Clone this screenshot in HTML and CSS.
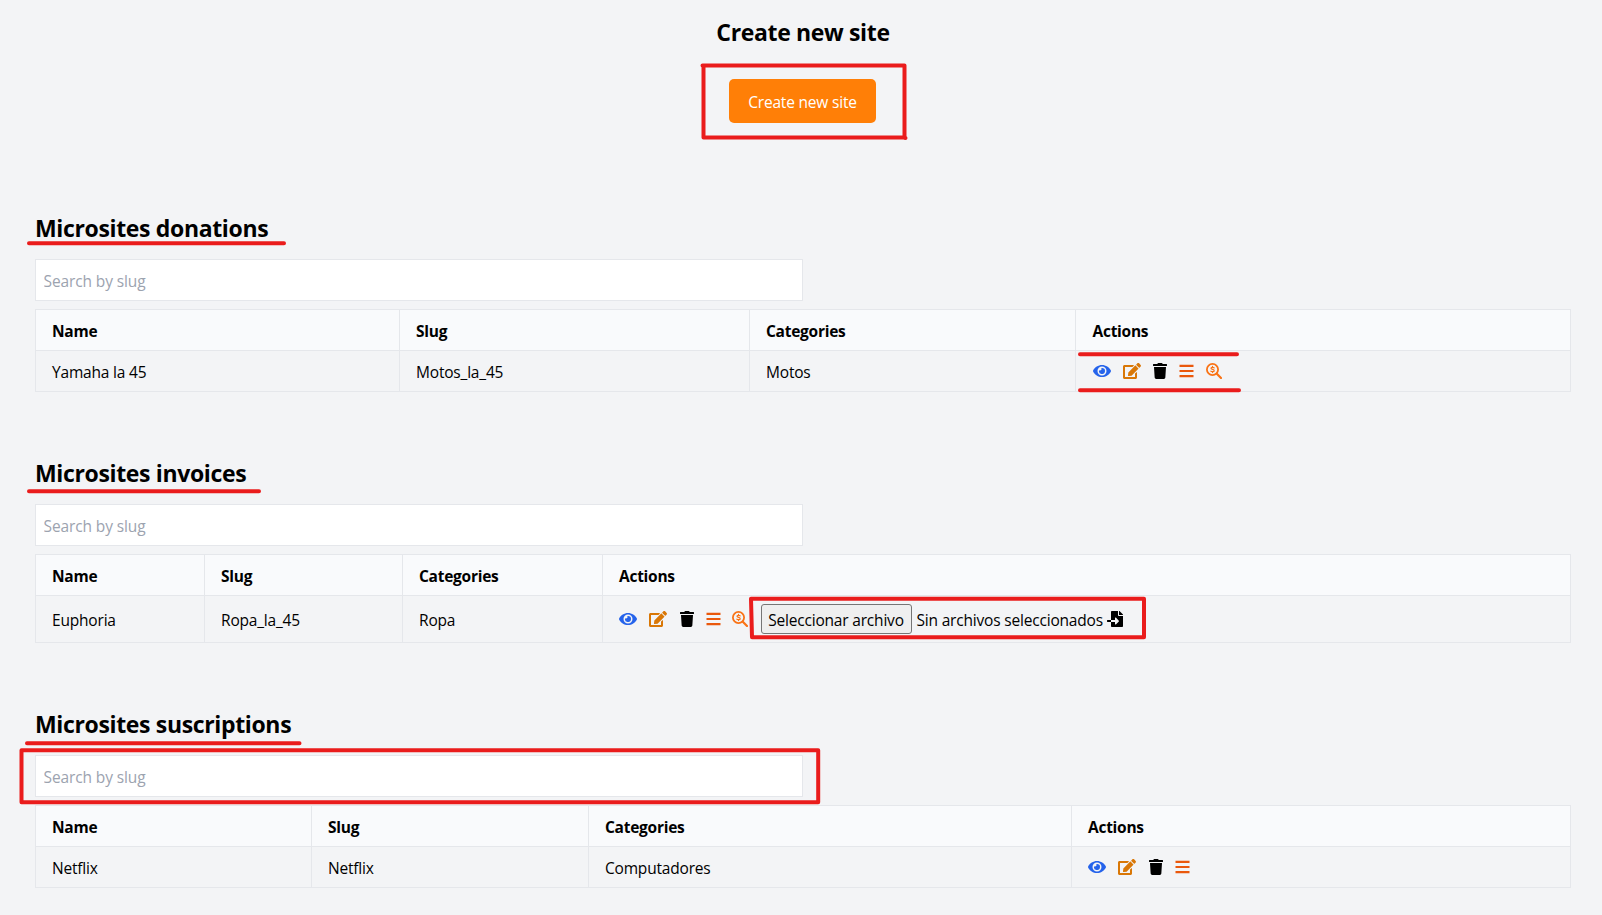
FILE: index.html
```html
<!DOCTYPE html>
<html lang="en">
<head>
<meta charset="utf-8">
<title>Microsites</title>
<link rel="stylesheet" href="styles.css">
</head>
<body>
<svg class="sprite" aria-hidden="true">
  <symbol id="eye" viewBox="0 0 576 512"><path d="M572.52 241.4C518.29 135.59 410.93 64 288 64S57.68 135.64 3.48 241.41a32.35 32.35 0 0 0 0 29.19C57.71 376.41 165.07 448 288 448s230.32-71.64 284.52-177.41a32.35 32.35 0 0 0 0-29.19zM288 400a144 144 0 1 1 144-144 143.93 143.93 0 0 1-144 144zm0-240a95.31 95.31 0 0 0-25.31 3.79 47.85 47.85 0 0 1-66.9 66.9A95.78 95.78 0 1 0 288 160z"/></symbol>
  <symbol id="edit" viewBox="0 0 576 512"><path d="M402.6 83.2l90.2 90.2c3.8 3.8 3.8 10 0 13.8L274.4 405.6l-92.8 10.3c-12.4 1.4-22.9-9.1-21.5-21.5l10.3-92.8L388.8 83.2c3.8-3.8 10-3.8 13.8 0zm162-22.9l-48.8-48.8c-15.2-15.2-39.9-15.2-55.2 0l-35.4 35.4c-3.8 3.8-3.8 10 0 13.8l90.2 90.2c3.8 3.8 10 3.8 13.8 0l35.4-35.4c15.2-15.3 15.2-40 0-55.2zM384 346.2V448H64V128h229.8c3.2 0 6.2-1.3 8.5-3.5l40-40c7.6-7.6 2.2-20.5-8.5-20.5H48C21.5 64 0 85.5 0 112v352c0 26.5 21.5 48 48 48h352c26.5 0 48-21.5 48-48V306.2c0-10.7-12.9-16-20.5-8.5l-40 40c-2.2 2.3-3.5 5.3-3.5 8.5z"/></symbol>
  <symbol id="trash" viewBox="0 0 448 512"><path d="M432 32H312l-9.4-18.7A24 24 0 0 0 281.1 0H166.8a23.72 23.72 0 0 0-21.4 13.3L136 32H16A16 16 0 0 0 0 48v32a16 16 0 0 0 16 16h416a16 16 0 0 0 16-16V48a16 16 0 0 0-16-16zM53.2 467a48 48 0 0 0 47.9 45h245.8a48 48 0 0 0 47.9-45L416 128H32z"/></symbol>
  <symbol id="bars" viewBox="0 0 15 16"><path d="M.5 1.800h14v2.200H.5zM.5 6.900h14v2.200H.5zM.5 12h14v2.200H.5z"/></symbol>
  <symbol id="dollar" viewBox="0 0 16 16"><g fill="none" stroke="currentColor" stroke-linecap="round"><circle cx="6.5" cy="6.5" r="5.6" stroke-width="1.800"/><path d="M10.800 10.800l4.200 4.200" stroke-width="2.200"/><path d="M8.200 4.900C7.600 4.300 5 4 5 5.300c0 1.500 3.200.8 3.200 2.400C8.200 9 5.500 8.900 4.800 8.100M6.500 3.400v.8M6.500 8.800v.8" stroke-width="1.200"/></g></symbol>
  <symbol id="import" viewBox="0 0 512 512"><path d="M16 288c-8.800 0-16 7.200-16 16v32c0 8.800 7.200 16 16 16h112v-64zm489-183L407.100 7c-4.500-4.500-10.600-7-17-7H384v128h128v-6.100c0-6.300-2.500-12.400-7-16.900zm-153 31V0H152c-13.300 0-24 10.700-24 24v264h128v-65.200c0-14.300 17.300-21.400 27.400-11.300L379 308c6.600 6.700 6.600 17.400 0 24l-95.700 96.400c-10.100 10.100-27.400 3-27.400-11.300V352H128v136c0 13.300 10.700 24 24 24h336c13.300 0 24-10.700 24-24V160H376c-13.200 0-24-10.800-24-24z"/></symbol>
</svg>
<main class="page">
  <header class="create">
    <h2 class="title">Create new site</h2>
    <button class="create-btn">Create new site</button>
  </header>

  <section class="microsites">
    <h2 class="title">Microsites donations</h2>
    <input class="search" placeholder="Search by slug">
    <table class="sites donations">
      <colgroup><col><col><col><col></colgroup>
      <tr><th>Name</th><th>Slug</th><th>Categories</th><th>Actions</th></tr>
      <tr><td>Yamaha la 45</td><td>Motos_la_45</td><td>Motos</td>
        <td><div class="actions">
          <svg class="icon blue"><use href="#eye"/></svg><svg class="icon amber"><use href="#edit"/></svg><svg class="icon trash"><use href="#trash"/></svg><svg class="icon bars"><use href="#bars"/></svg><svg class="icon dollar"><use href="#dollar"/></svg>
        </div></td></tr>
    </table>
  </section>

  <section class="microsites">
    <h2 class="title">Microsites invoices</h2>
    <input class="search" placeholder="Search by slug">
    <table class="sites invoices">
      <colgroup><col><col><col><col></colgroup>
      <tr><th>Name</th><th>Slug</th><th>Categories</th><th>Actions</th></tr>
      <tr><td>Euphoria</td><td>Ropa_la_45</td><td>Ropa</td>
        <td><div class="actions">
          <svg class="icon blue"><use href="#eye"/></svg><svg class="icon amber"><use href="#edit"/></svg><svg class="icon trash"><use href="#trash"/></svg><svg class="icon bars"><use href="#bars"/></svg><svg class="icon dollar"><use href="#dollar"/></svg>
          <div class="upload"><button class="file-btn">Seleccionar archivo</button><span class="file-name">Sin archivos seleccionados</span><svg class="icon import"><use href="#import"/></svg></div>
        </div></td></tr>
    </table>
  </section>

  <section class="microsites">
    <h2 class="title">Microsites suscriptions</h2>
    <input class="search" placeholder="Search by slug">
    <table class="sites suscriptions">
      <colgroup><col><col><col><col></colgroup>
      <tr><th>Name</th><th>Slug</th><th>Categories</th><th>Actions</th></tr>
      <tr><td>Netflix</td><td>Netflix</td><td>Computadores</td>
        <td><div class="actions">
          <svg class="icon blue"><use href="#eye"/></svg><svg class="icon amber"><use href="#edit"/></svg><svg class="icon trash"><use href="#trash"/></svg><svg class="icon bars"><use href="#bars"/></svg>
        </div></td></tr>
    </table>
  </section>
</main>
<svg class="marks" viewBox="0 0 1602 915" aria-hidden="true">
  <path d="M702.500 65.500H904.500V137.500H703.500V65.500M905 138h.5"/>
  <path d="M29 243.200H284M29 491.200H259M27 743.200H299.500"/>
  <path d="M1080 354.300H1237M1080 390.300H1239"/>
  <path d="M751 598.700H1144V637.300H752L751 598.700"/>
  <path d="M21.500 750.300H818.200V802.300H21.500V750.300"/>
</svg>
</body>
</html>
```
FILE: styles.css
```css
* { box-sizing: border-box; }
body {
  margin: 0;
  height: 915px;
  overflow: hidden;
  position: relative;
  background: #f3f4f6;
  color: #000;
  font: 15.5px/24px "Open Sans", "Noto Sans", sans-serif;
  letter-spacing: -0.19px;
}
.sprite { display: none; }
.page { width: 1536px; margin-left: 35px; padding-top: 16px; }
.create { display: flex; flex-direction: column; align-items: center; height: 147px; }
.title { margin: 0; font-size: 23px; line-height: 33px; font-weight: 700; letter-spacing: -0.35px; }
.create-btn {
  width: 147px; height: 44px; margin: 30px 1px 0 0; padding: 1px 0 0;
  border: 0; border-radius: 5px;
  background: #ff7f07; color: #fff; font: inherit; letter-spacing: inherit;
}
.microsites { padding-top: 49px; margin-bottom: 16px; }
.microsites .title { height: 47px; }
.search {
  display: block; width: 768px; height: 42px; padding: 9px 8px 7px 7.500px; margin-bottom: 8px;
  border: 1px solid #e5e7eb; background: #fff; font: inherit; letter-spacing: -0.12px;
}
.search::placeholder { color: #9ca3af; opacity: 1; }
.sites { width: 1536px; table-layout: fixed; border-collapse: separate; border-spacing: 0; border-top: 1px solid #e5e7eb; border-left: 1px solid #e5e7eb; }
.sites th, .sites td {
  height: 41px; padding: 1px 16px 0; text-align: left;
  border-right: 1px solid #e5e7eb; border-bottom: 1px solid #e5e7eb;
}
.sites th { background: #f9fafc; font-weight: 700; letter-spacing: -0.26px; }
.sites td:last-child { padding-top: 0; }
.donations col:nth-child(1) { width: 364px; }
.donations col:nth-child(2) { width: 350px; }
.donations col:nth-child(3) { width: 326px; }
.donations th:last-child, .donations td:last-child { padding-left: 16.500px; }
.invoices col:nth-child(1) { width: 169px; }
.invoices col:nth-child(2) { width: 198px; }
.invoices col:nth-child(3) { width: 200px; }
.invoices td { height: 47px; }
.suscriptions col:nth-child(1) { width: 276px; }
.suscriptions col:nth-child(2) { width: 277px; }
.suscriptions col:nth-child(3) { width: 483px; }
.actions { display: flex; align-items: center; gap: 12px; }
.icon { display: block; width: 18px; height: 16px; fill: currentColor; flex: none; }
.blue { color: #2563eb; }
.amber { color: #d97706; }
.trash { width: 14px; margin-left: .5px; }
.bars { width: 15px; color: #ea580c; }
.dollar { width: 16px; margin-left: -.5px; color: #f97316; }
.upload { display: flex; align-items: center; margin-left: .5px; }
.file-btn {
  width: 151px; height: 30px; padding: 1px 0 0; margin-right: 5px;
  border: 1px solid #767676; border-radius: 3px; background: #efefef; color: #000; font: inherit; letter-spacing: inherit;
}
.file-name { width: 190px; padding-top: 1px; white-space: nowrap; }
.import { width: 16px; }
.marks {
  position: absolute; left: 0; top: 0; width: 1602px; height: 915px;
  fill: none; stroke: #ea1c1c; stroke-width: 4; stroke-linecap: round; stroke-linejoin: round;
  pointer-events: none;
}
```
